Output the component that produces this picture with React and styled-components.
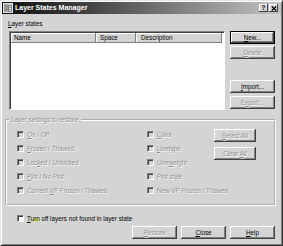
import React from 'react';
import styled, { createGlobalStyle } from 'styled-components';

const FACE = '#d4d4d4';
const FONT = '"Liberation Sans", Arial, sans-serif';

const Global = createGlobalStyle`
  html, body { margin: 0; padding: 0; background: ${FACE}; }
  body { font-family: ${FONT}; }
  * { box-sizing: border-box; }
`;

const Window = styled.div`
  width: 283px;
  height: 246px;
  background: ${FACE};
  border: 1px solid;
  border-color: #e4e4e4 #303030 #303030 #e4e4e4;
  box-shadow: inset 1px 1px #fff, inset -1px -1px #808080;
  padding: 1px;
  display: flex;
  flex-direction: column;
  font-family: ${FONT};
  font-size: 6.3px;
  color: #000;
`;

const TitleBar = styled.div`
  height: 12px;
  display: flex;
  align-items: center;
  padding: 0 3px 0 1px;
  background: linear-gradient(90deg, #0c0c0c 0%, #4a4a4a 35%, #c4c4c4 100%);
`;

const TitleText = styled.span`
  margin-left: 2px;
  font-weight: bold;
  font-size: 7px;
  color: #fff;
  line-height: 12px;
  white-space: nowrap;
`;

const TitleButtons = styled.div`
  margin-left: auto;
  display: flex;
  gap: 1px;
`;

const TitleBtn = styled.div`
  width: 9px;
  height: 8px;
  background: ${FACE};
  box-shadow: inset -1px -1px #404040, inset 1px 1px #fff;
  display: flex;
  align-items: center;
  justify-content: center;
  font-weight: bold;
  font-size: 6.5px;
  line-height: 8px;
  color: #000;
`;

const Content = styled.div`
  display: flex;
  flex-direction: column;
  padding: 6px 5px 0 3px;
`;

const Label = styled.div`
  margin-left: 3px;
  height: 8px;
  line-height: 8px;
  white-space: nowrap;
`;

const TopSection = styled.div`
  margin: 3px 0 0 4px;
  display: flex;
  gap: 5px;
  height: 79px;
`;

const ListBox = styled.div`
  width: 216px;
  height: 79px;
  background: #fff;
  border: 1px solid;
  border-color: #808080 #fff #fff #808080;
  box-shadow: inset 1px 1px #404040;
  padding: 1px 0 0 1px;
`;

const Header = styled.div`
  display: flex;
  height: 10px;
`;

const HeadCell = styled.div`
  width: ${(p) => p.$w}px;
  height: 10px;
  line-height: 10px;
  padding-left: ${(p) => p.$pl}px;
  background: ${FACE};
  box-shadow: inset -1px -1px #808080, inset 1px 1px #fff;
  white-space: nowrap;
`;

const ButtonCol = styled.div`
  width: 45px;
  display: flex;
  flex-direction: column;
`;

const Btn = styled.button`
  width: ${(p) => p.$w || 45}px;
  height: 13px;
  flex: none;
  margin: ${(p) => p.$mt || 0}px 0 0 0;
  padding: 0;
  border: none;
  background: ${FACE};
  font-family: ${FONT};
  font-size: 6.3px;
  line-height: 13px;
  color: #000;
  box-shadow: ${(p) =>
    p.$default
      ? 'inset 0 0 0 1px #000, inset -2px -2px #404040, inset 2px 2px #fff, inset -3px -3px #808080'
      : 'inset -1px -1px #404040, inset 1px 1px #fff, inset -2px -2px #808080'};
  &:disabled {
    color: #8e8e8e;
    text-shadow: 0.6px 0.6px 0 #fff;
  }
`;

const Group = styled.fieldset`
  margin: 6px 0 0 0;
  padding: 0;
  width: 271px;
  border: 2px groove #fff;
  min-inline-size: 0;
`;

const Legend = styled.legend`
  margin-left: 2px;
  padding: 0 2px;
  height: 8px;
  line-height: 8px;
  color: #8e8e8e;
  text-shadow: 0.6px 0.6px 0 #fff;
  white-space: nowrap;
`;

const GroupBody = styled.div`
  display: flex;
  padding: 3px 0 7px 10px;
`;

const Column = styled.div`
  width: ${(p) => p.$w}px;
  display: flex;
  flex-direction: column;
`;

const SideButtons = styled.div`
  display: flex;
  flex-direction: column;
  gap: 5px;
  padding-top: 2px;
`;

const CheckRow = styled.div`
  height: 14px;
  display: flex;
  align-items: center;
  gap: 3px;
  white-space: nowrap;
  color: ${(p) => (p.$disabled ? '#8e8e8e' : '#000')};
  text-shadow: ${(p) => (p.$disabled ? '0.6px 0.6px 0 #fff' : 'none')};
`;

const Box = styled.span`
  width: 7px;
  height: 7px;
  flex: none;
  border: 1px solid;
  border-color: #808080 #fff #fff #808080;
  box-shadow: inset 1px 1px #404040;
  background: ${(p) => (p.$disabled ? FACE : '#fff')};
`;

const BottomCheck = styled.div`
  margin: 5px 0 0 12px;
`;

const ButtonRow = styled.div`
  margin: 1px 1px 0 0;
  display: flex;
  justify-content: flex-end;
  gap: 4px;
`;

const Check = ({ children, disabled }) => (
  <CheckRow $disabled={disabled}>
    <Box $disabled={disabled} />
    <span>{children}</span>
  </CheckRow>
);

const AppIcon = () => (
  <svg width="10" height="10" viewBox="0 0 10 10">
    <rect x="0.5" y="0.5" width="9" height="9" fill="#c8c8c8" stroke="#e8e8e8" />
    <rect x="1.5" y="1.5" width="3" height="7" fill="#606060" />
    <path d="M2 3h2M2 5h2M2 7h2" stroke="#e0e0e0" strokeWidth="0.8" />
    <path d="M5.5 2.5h3v6h-3z" fill="#f0f0f0" stroke="#404040" strokeWidth="0.6" />
    <path d="M6 4.5h2M6 6.5h2" stroke="#404040" strokeWidth="0.6" />
  </svg>
);

const CloseGlyph = () => (
  <svg width="6" height="5" viewBox="0 0 6 5">
    <path d="M0.8 0.5L5.2 4.5M5.2 0.5L0.8 4.5" stroke="#000" strokeWidth="1.2" />
  </svg>
);

export default function App() {
  return (
    <>
      <Global />
      <Window>
        <TitleBar>
          <AppIcon />
          <TitleText>Layer States Manager</TitleText>
          <TitleButtons>
            <TitleBtn>?</TitleBtn>
            <TitleBtn>
              <CloseGlyph />
            </TitleBtn>
          </TitleButtons>
        </TitleBar>
        <Content>
          <Label>
            <u>L</u>ayer states
          </Label>
          <TopSection>
            <ListBox>
              <Header>
                <HeadCell $w={85} $pl={3}>Name</HeadCell>
                <HeadCell $w={40} $pl={4}>Space</HeadCell>
                <HeadCell $w={86} $pl={5}>Description</HeadCell>
              </Header>
            </ListBox>
            <ButtonCol>
              <Btn $default>
                <u>N</u>ew...
              </Btn>
              <Btn $mt={2} disabled>
                <u>D</u>elete
              </Btn>
              <Btn $mt={21}>
                <u>I</u>mport...
              </Btn>
              <Btn $mt={3} disabled>
                E<u>x</u>port...
              </Btn>
            </ButtonCol>
          </TopSection>
          <Group>
            <Legend>Layer settings to restore</Legend>
            <GroupBody>
              <Column $w={130}>
                <Check disabled>
                  <u>O</u>n / Off
                </Check>
                <Check disabled>
                  <u>F</u>rozen / Thawed
                </Check>
                <Check disabled>
                  Loc<u>k</u>ed / Unlocked
                </Check>
                <Check disabled>
                  <u>P</u>lot / No Plot
                </Check>
                <Check disabled>
                  Current <u>V</u>P Frozen / Thawed
                </Check>
              </Column>
              <Column $w={67}>
                <Check disabled>
                  <u>C</u>olor
                </Check>
                <Check disabled>
                  <u>L</u>inetype
                </Check>
                <Check disabled>
                  Line<u>w</u>eight
                </Check>
                <Check disabled>
                  Plot st<u>y</u>le
                </Check>
                <Check disabled>New VP Frozen / Thawed</Check>
              </Column>
              <SideButtons>
                <Btn $w={42} disabled>
                  <u>S</u>elect All
                </Btn>
                <Btn $w={42} disabled>
                  Clear <u>A</u>ll
                </Btn>
              </SideButtons>
            </GroupBody>
          </Group>
          <BottomCheck>
            <Check>
              <u>T</u>urn off layers not found in layer state
            </Check>
          </BottomCheck>
          <ButtonRow>
            <Btn disabled>
              <u>R</u>estore
            </Btn>
            <Btn>
              <u>C</u>lose
            </Btn>
            <Btn>
              <u>H</u>elp
            </Btn>
          </ButtonRow>
        </Content>
      </Window>
    </>
  );
}
